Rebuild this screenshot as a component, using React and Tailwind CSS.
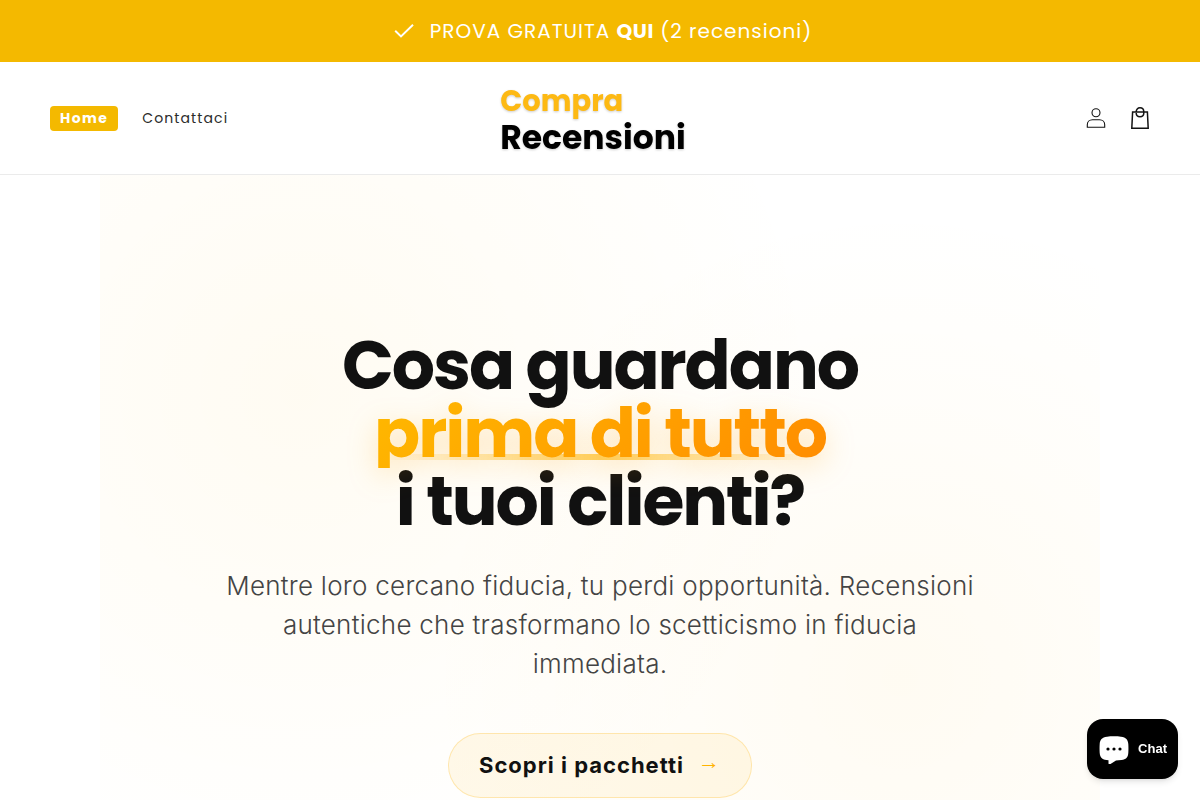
import React from 'react';

const CheckIcon = () => (
  <svg className="w-5 h-5" viewBox="0 0 20 20" fill="none" stroke="currentColor" strokeWidth="2" aria-hidden="true">
    <path d="M1.200 9.8 L7 15.4 L19 3.8" />
  </svg>
);

const AccountIcon = () => (
  <svg className="w-5 h-5" viewBox="0 0 20 20" fill="none" stroke="currentColor" strokeWidth="1.1" aria-hidden="true">
    <circle cx="10" cy="4.7" r="4" />
    <path d="M1.3 19.3 V16.8 C1.3 13.8 3.6 11.8 6.5 11.8 H13.5 C16.4 11.8 18.7 13.8 18.7 16.8 V19.3 Z" />
  </svg>
);

const CartIcon = () => (
  <svg className="w-6 h-6" viewBox="0 0 24 24" fill="none" stroke="currentColor" strokeWidth="1.5" aria-hidden="true">
    <path d="M4.6 6 H19.4 L20.2 22.2 H3.8 Z" />
    <path d="M8.2 6 C8.2 3.4 9.7 1.8 12 1.8 C14.3 1.8 15.8 3.4 15.8 6 V7 C15.8 9.2 14.3 10.7 12 10.7 C9.7 10.7 8.2 9.2 8.2 7" />
  </svg>
);

const ChatIcon = () => (
  <svg className="w-[30px] h-[30px]" viewBox="0 0 30 30" aria-hidden="true">
    <path
      fill="#fff"
      transform="translate(0 2)"
      d="M8 .7 C12 .2 18 .2 22 .7 C27 1.3 29 3.6 29.3 8 C29.5 11 29.5 14 29.3 17 C29 21.6 27 23.5 22.5 24 C20.5 24.2 18.5 24.3 17 24.4 L11.5 28 C10.5 28.7 9.5 28.3 9.5 27.2 V24.3 C4 24 1 22 .7 17 C.5 14 .5 11 .7 8 C1 3.6 3 1.3 8 .7 Z"
    />
    <circle cx="9" cy="15" r="1.6" />
    <circle cx="15" cy="15" r="1.6" />
    <circle cx="21" cy="15" r="1.6" />
  </svg>
);

const AnnouncementBar = () => (
  <div className="flex items-center justify-center gap-4 bg-[#f4b900] text-white pl-5 pr-3.5 py-4">
    <CheckIcon />
    <p className="text-xl leading-[30px] tracking-[1px]">
      PROVA GRATUITA{' '}
      <a href="#prova" className="font-bold tracking-wide">QUI</a>{' '}
      (2 recensioni)
    </p>
  </div>
);

const Header = () => (
  <header className="grid grid-cols-3 items-center pl-[50px] pr-12 h-[113px] bg-white border-b border-[#ebebeb]">
    <nav className="flex items-center gap-6 text-sm leading-[21px]">
      <a href="#home" className="bg-[#f4b900] text-white font-bold tracking-widest rounded-sm px-2.5 py-0.5">Home</a>
      <a href="#contattaci" className="tracking-[0.08em] text-[#2b2b2b]">Contattaci</a>
    </nav>
    <a
      href="#home"
      className="justify-self-center pr-4 font-bold drop-shadow-[0_1px_1px_rgba(0,0,0,0.2)]"
    >
      <span className="block text-[29px] leading-[38px] text-[#fdb913]">Compra</span>
      <span className="block text-[33px] leading-[35px] text-black">Recensioni</span>
    </a>
    <div className="flex items-center gap-[22px] justify-self-end text-[#121212]">
      <a href="#account" aria-label="Accedi"><AccountIcon /></a>
      <a href="#carrello" aria-label="Carrello"><CartIcon /></a>
    </div>
  </header>
);

const Hero = () => (
  <section className="max-w-[1000px] mx-auto px-[100px] pt-[157px] pb-24 text-center bg-[radial-gradient(circle_at_20%_30%,rgba(255,184,0,0.05)_0%,transparent_55%),radial-gradient(circle_at_80%_70%,rgba(255,179,0,0.05)_0%,transparent_50%)]">
    <h1 className="text-[68px] leading-[68px] font-bold tracking-[-0.03em] text-[#111]">
      <span className="block">Cosa guardano</span>
      <span className="relative inline-block align-top drop-shadow-[0_8px_14px_rgba(255,160,0,0.25)]">
        <span className="absolute inset-x-0 bottom-2 h-1.5 bg-linear-to-r from-transparent via-[#ffb300] to-transparent opacity-60" />
        <span className="relative block bg-linear-135 from-[#ffb800] to-[#ff8c00] bg-clip-text text-transparent">
          prima di tutto
        </span>
      </span>
      <span className="block">i tuoi clienti?</span>
    </h1>
    <p className="mt-[30px] px-5 font-[Inter,sans-serif] text-[26px] leading-[39px] font-light tracking-[0.01em] text-[#444]">
      Mentre loro cercano fiducia, tu perdi opportunità. Recensioni autentiche che trasformano lo scetticismo in fiducia
      immediata.
    </p>
    <a
      href="#pacchetti"
      className="inline-flex items-center gap-3.5 mt-[50px] px-[30px] py-4 rounded-full border border-[#ffb300]/25 bg-[#ffb300]/8 font-[Inter,sans-serif] text-[22px] leading-[31px] font-bold tracking-[1px] text-[#111]"
    >
      Scopri i pacchetti
      <span className="self-start leading-6 font-['Liberation_Sans',sans-serif] text-[#ffb300]">→</span>
    </a>
  </section>
);

const ChatButton = () => (
  <button
    type="button"
    className="fixed right-[22px] bottom-[21px] flex items-center gap-[9px] h-[60px] pl-3 pr-[11px] rounded-2xl bg-black text-white font-['Liberation_Sans',sans-serif] text-[13px] font-bold shadow-md"
  >
    <ChatIcon />
    Chat
  </button>
);

export default function App() {
  return (
    <div className="min-h-screen bg-white font-[Poppins,Inter,sans-serif]">
      <AnnouncementBar />
      <Header />
      <main>
        <Hero />
      </main>
      <ChatButton />
    </div>
  );
}
